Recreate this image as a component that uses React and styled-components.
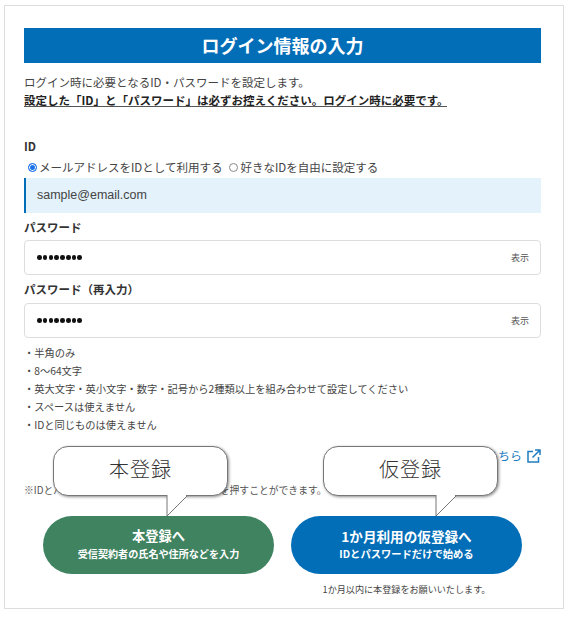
import React from 'react'
import styled, { createGlobalStyle } from 'styled-components'

const GlobalStyle = createGlobalStyle`
  html, body {
    margin: 0;
    padding: 0;
    background: #fff;
  }
  body {
    font-family: "Noto Sans CJK JP", "Noto Sans", sans-serif;
    color: #333;
  }
`

const Page = styled.div`
  width: 571px;
  height: 617px;
  padding: 5px 7px 0 4px;
  box-sizing: border-box;
`

const Card = styled.div`
  width: 560px;
  height: 604px;
  box-sizing: border-box;
  border: 1px solid #ddd;
  padding: 22px 22px 0 19px;
`

const Heading = styled.h1`
  margin: 0;
  height: 35px;
  background: #036eb8;
  color: #fff;
  font-size: 18px;
  font-weight: 700;
  line-height: 35px;
  text-align: center;
`

const Lead = styled.p`
  margin: 10px 0 0;
  font-size: 11.5px;
  line-height: 18px;
  color: #444;
`

const Strong = styled.p`
  margin: 4px 0 0;
  width: 423px;
  white-space: nowrap;
  font-size: 11.5px;
  line-height: 11px;
  font-weight: 700;
  color: #222;
  border-bottom: 1px solid #555;
`

const Label = styled.div`
  margin-top: ${p => p.$top}px;
  font-size: 11.5px;
  line-height: 16px;
  font-weight: 700;
  color: #333;
`

const Radios = styled.div`
  display: flex;
  gap: 7px;
  margin: 4px 0 2px 4px;
  font-size: 11.5px;
  line-height: 18px;
  color: #444;
`

const RadioLabel = styled.label`
  display: flex;
  align-items: center;
  gap: 2px;
`

const RadioDot = styled.span`
  width: 9px;
  height: 9px;
  box-sizing: border-box;
  border-radius: 50%;
  border: 1px solid ${p => (p.$on ? '#1a73e8' : '#888')};
  background: ${p => (p.$on ? '#1a73e8' : '#fff')};
  box-shadow: ${p => (p.$on ? 'inset 0 0 0 1px #fff' : 'none')};
`

const ReadonlyField = styled.div`
  height: 35px;
  box-sizing: border-box;
  background: #e3f2fb;
  border-left: 2px solid #036eb8;
  padding-left: 11px;
  font-family: "Liberation Sans", sans-serif;
  font-size: 12.5px;
  line-height: 35px;
  color: #444;
`

const PasswordField = styled.div`
  display: flex;
  align-items: center;
  justify-content: space-between;
  height: 35px;
  margin-top: ${p => p.$top}px;
  box-sizing: border-box;
  border: 1px solid #ddd;
  border-radius: 4px;
  padding: 0 11px 0 12px;
`

const Dots = styled.div`
  display: flex;
  gap: 1.1px;
`

const Dot = styled.span`
  width: 4.7px;
  height: 4.7px;
  border-radius: 50%;
  background: #111;
`

const Toggle = styled.span`
  font-size: 9px;
  color: #555;
`

const Rules = styled.ul`
  list-style: none;
  margin: 6px 0 0;
  padding: 0;
  font-size: 10.25px;
  line-height: 18px;
  color: #444;
`

const Link = styled.a`
  display: flex;
  justify-content: flex-end;
  align-items: center;
  gap: 5px;
  margin-top: 13px;
  font-size: 12px;
  line-height: 18px;
  color: #1f7cc0;
  text-decoration: none;
`

const Notice = styled.p`
  margin: 16px 0 0;
  font-size: 9.8px;
  line-height: 18px;
  color: #555;
`

const Actions = styled.div`
  display: flex;
  gap: 17px;
  margin: 17px 0 0 19px;
`

const Action = styled.div`
  position: relative;
  width: 231px;
`

const MainButton = styled.button`
  display: block;
  width: 100%;
  height: 58px;
  padding: 0 0 3px;
  border: 0;
  border-radius: 29px;
  background: ${p => p.$color};
  color: #fff;
  font-family: inherit;
  font-weight: 700;
  text-align: center;
`

const ButtonTitle = styled.span`
  display: block;
  font-size: ${p => p.$size}px;
  line-height: 20px;
`

const ButtonSub = styled.span`
  display: block;
  font-size: ${p => p.$size}px;
  line-height: 16px;
`

const Balloon = styled.div`
  position: absolute;
  top: -70px;
  left: ${p => p.$left}px;
  width: 175px;
  height: 50px;
  box-sizing: border-box;
  background: #fff;
  border: 1px solid #777;
  border-radius: 15px;
  box-shadow: 1px 1px 3px rgba(0, 0, 0, 0.45);
  font-size: 20px;
  font-weight: 300;
  line-height: 44px;
  letter-spacing: 1px;
  text-align: center;
  color: #333;
`

const BalloonTail = styled.svg`
  position: absolute;
  top: -21px;
  left: ${p => p.$left}px;
  overflow: visible;
`

const Caption = styled.p`
  margin: 8px 0 0;
  font-size: 9.1px;
  line-height: 14px;
  text-align: center;
  color: #444;
`

const rules = [
  '・半角のみ',
  '・8〜64文字',
  '・英大文字・英小文字・数字・記号から2種類以上を組み合わせて設定してください',
  '・スペースは使えません',
  '・IDと同じものは使えません',
]

function Password({ top }) {
  return (
    <PasswordField $top={top}>
      <Dots>
        {Array.from({ length: 8 }).map((_, i) => <Dot key={i} />)}
      </Dots>
      <Toggle>表示</Toggle>
    </PasswordField>
  )
}

function Tail({ left }) {
  return (
    <BalloonTail $left={left} width="22" height="22" viewBox="0 0 22 22">
      <path d="M0 1 L0 21 L20 1" fill="#fff" stroke="#777" strokeWidth="1" />
      <path d="M0.5 0 L19 0 L19 1 L0.5 1 Z" fill="#fff" />
    </BalloonTail>
  )
}

export default function App() {
  return (
    <>
      <GlobalStyle />
      <Page>
        <Card>
          <Heading>ログイン情報の入力</Heading>
          <Lead>ログイン時に必要となるID・パスワードを設定します。</Lead>
          <Strong>設定した「ID」と「パスワード」は必ずお控えください。ログイン時に必要です。</Strong>

          <Label $top={31}>ID</Label>
          <Radios>
            <RadioLabel><RadioDot $on />メールアドレスをIDとして利用する</RadioLabel>
            <RadioLabel><RadioDot />好きなIDを自由に設定する</RadioLabel>
          </Radios>
          <ReadonlyField>sample@email.com</ReadonlyField>

          <Label $top={6}>パスワード</Label>
          <Password top={5} />
          <Label $top={6}>パスワード（再入力）</Label>
          <Password top={6} />

          <Rules>
            {rules.map(r => <li key={r}>{r}</li>)}
          </Rules>

          <Link href="#">
            パスワードの確認はこちら
            <svg width="14" height="14" viewBox="0 0 14 14" fill="none" stroke="#1f7cc0" strokeWidth="1.5">
              <path d="M11.5 8 V13 H1 V2.5 H6" />
              <path d="M5.5 8.5 L13 1 M8 1 H13 V6" />
            </svg>
          </Link>

          <Notice>※IDとパスワードを入力後に「次へ」ボタンを押すことができます。</Notice>

          <Actions>
            <Action>
              <Balloon $left={10}>本登録</Balloon>
              <Tail left={124} />
              <MainButton $color="#3f8361">
                <ButtonTitle $size={13.25}>本登録へ</ButtonTitle>
                <ButtonSub $size={10.1}>受信契約者の氏名や住所などを入力</ButtonSub>
              </MainButton>
            </Action>
            <Action>
              <Balloon $left={32}>仮登録</Balloon>
              <Tail left={145} />
              <MainButton $color="#036eb8">
                <ButtonTitle $size={13.6}>1か月利用の仮登録へ</ButtonTitle>
                <ButtonSub $size={10.3}>IDとパスワードだけで始める</ButtonSub>
              </MainButton>
              <Caption>1か月以内に本登録をお願いいたします。</Caption>
            </Action>
          </Actions>
        </Card>
      </Page>
    </>
  )
}
